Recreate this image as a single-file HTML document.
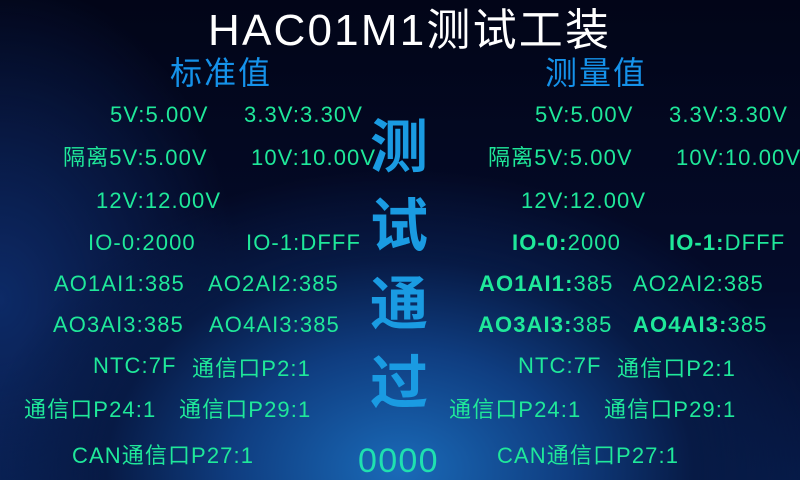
<!DOCTYPE html>
<html><head><meta charset="utf-8"><style>
*{margin:0;padding:0}
body{width:800px;height:480px;overflow:hidden;position:relative;font-family:"Liberation Sans","Noto Sans CJK SC",sans-serif;
background:radial-gradient(ellipse 420px 300px at 400px 470px,#1a6ab8 0%,#0f3d80 40%,#071a45 70%,transparent 100%),radial-gradient(ellipse 300px 400px at 0px 300px,#0d2a66 0%,transparent 80%),linear-gradient(180deg,#020518 0%,#040b2a 60%,#061a48 100%);}
.t{position:absolute;white-space:nowrap;color:#1fe89a;font-size:22px;line-height:1;transform:translateY(-50%);letter-spacing:1.1px}
.t b{font-weight:bold}
.h{position:absolute;white-space:nowrap;line-height:1;transform:translateY(-50%)}
</style></head><body>
<div class="h" style="left:208px;top:31px;font-size:44px;color:#fff;letter-spacing:2.2px">HAC01M1测试工装</div>
<div class="h" style="left:170px;top:73px;font-size:32px;color:#1592ea;letter-spacing:2px">标准值</div>
<div class="h" style="left:545px;top:73px;font-size:32px;color:#1592ea;letter-spacing:2px">测量值</div>
<div class="h" style="left:370px;top:148px;font-size:58px;font-weight:bold;color:#1a9be2">测</div>
<div class="h" style="left:370px;top:227px;font-size:58px;font-weight:bold;color:#1a9be2">试</div>
<div class="h" style="left:370px;top:305px;font-size:58px;font-weight:bold;color:#1a9be2">通</div>
<div class="h" style="left:370px;top:384px;font-size:58px;font-weight:bold;color:#1a9be2">过</div>
<div class="h" style="left:358px;top:461px;font-size:34px;color:#1fe0b0;letter-spacing:1.3px">0000</div>

<div class="t" style="left:110px;top:115px">5V:5.00V</div>
<div class="t" style="left:244px;top:115px">3.3V:3.30V</div>
<div class="t" style="left:63px;top:158px">隔离5V:5.00V</div>
<div class="t" style="left:251px;top:158px">10V:10.00V</div>
<div class="t" style="left:96px;top:201px">12V:12.00V</div>
<div class="t" style="left:88px;top:243px">IO-0:2000</div>
<div class="t" style="left:246px;top:243px">IO-1:DFFF</div>
<div class="t" style="left:54px;top:284px">AO1AI1:385</div>
<div class="t" style="left:208px;top:284px">AO2AI2:385</div>
<div class="t" style="left:53px;top:325px">AO3AI3:385</div>
<div class="t" style="left:209px;top:325px">AO4AI3:385</div>
<div class="t" style="left:93px;top:366px">NTC:7F</div>
<div class="t" style="left:192px;top:369px">通信口P2:1</div>
<div class="t" style="left:24px;top:410px">通信口P24:1</div>
<div class="t" style="left:179px;top:410px">通信口P29:1</div>
<div class="t" style="left:72px;top:456px">CAN通信口P27:1</div>

<div class="t" style="left:535px;top:115px">5V:5.00V</div>
<div class="t" style="left:669px;top:115px">3.3V:3.30V</div>
<div class="t" style="left:488px;top:158px">隔离5V:5.00V</div>
<div class="t" style="left:676px;top:158px">10V:10.00V</div>
<div class="t" style="left:521px;top:201px">12V:12.00V</div>
<div class="t" style="left:512px;top:243px"><b>IO-0:</b>2000</div>
<div class="t" style="left:669px;top:243px"><b>IO-1:</b>DFFF</div>
<div class="t" style="left:479px;top:284px"><b>AO1AI1:</b>385</div>
<div class="t" style="left:633px;top:284px">AO2AI2:385</div>
<div class="t" style="left:478px;top:325px"><b>AO3AI3:</b>385</div>
<div class="t" style="left:633px;top:325px"><b>AO4AI3:</b>385</div>
<div class="t" style="left:518px;top:366px">NTC:7F</div>
<div class="t" style="left:617px;top:369px">通信口P2:1</div>
<div class="t" style="left:449px;top:410px">通信口P24:1</div>
<div class="t" style="left:604px;top:410px">通信口P29:1</div>
<div class="t" style="left:497px;top:456px">CAN通信口P27:1</div>
</body></html>
